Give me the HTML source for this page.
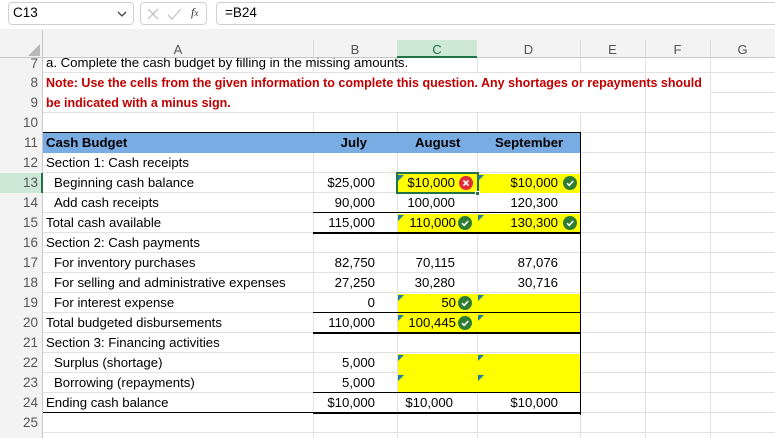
<!DOCTYPE html>
<html><head><meta charset="utf-8"><style>
*{margin:0;padding:0;box-sizing:border-box}
body{width:775px;height:438px;overflow:hidden;background:#fff;font-family:"Liberation Sans",Arial,sans-serif;position:relative}
.a{position:absolute}
.t{position:absolute;font-size:13.2px;line-height:20px;white-space:nowrap;color:#000}
.r{text-align:right}
.y{position:absolute;background:#ffff00}
.vl{position:absolute;width:1px;background:#e1e1e1}
.hl{position:absolute;height:1px;background:#e1e1e1}
.bk{position:absolute;background:#000}
.rn{position:absolute;left:0;width:38px;text-align:right;font-size:13.5px;line-height:20px;color:#555}
.ch{position:absolute;top:40px;height:18px;text-align:center;font-size:13px;line-height:20px;color:#555}
.tri{position:absolute;width:6px;height:6px}
.ok,.bad{position:absolute;width:14px;height:14px;border-radius:50%}
.ok{background:#2e7d32}.bad{background:#e12b38}
</style></head><body>
<svg width="0" height="0" style="position:absolute"><defs></defs></svg>
<!-- top bar -->
<div class="a" style="left:0;top:0;width:775px;height:40px;background:#f3f3f3"></div>
<div class="a" style="left:0;top:0;width:775px;height:29px;background:#fff"></div>
<div class="a" style="left:8px;top:2px;width:126px;height:23px;background:#fff;border:1px solid #d0d0d0;border-radius:4px"></div>
<div class="t" style="left:13px;top:3px;font-size:13.5px">C13</div>
<svg class="a" style="left:117px;top:10px" width="10" height="8"><path d="M1 2 L5 6 L9 2" stroke="#444" stroke-width="1.3" fill="none"/></svg>
<div class="a" style="left:140px;top:2px;width:67px;height:23px;background:#fff;border:1px solid #d0d0d0;border-radius:4px"></div>
<svg class="a" style="left:146px;top:7px" width="40" height="14"><path d="M2 2 L12 12 M12 2 L2 12" stroke="#c4c4c4" stroke-width="1.3"/><path d="M22 8 L26 12 L35 2" stroke="#c4c4c4" stroke-width="1.3" fill="none"/></svg>
<div class="t" style="left:191px;top:2px;font-size:12px;font-style:italic;color:#333;font-family:'Liberation Serif',serif">f<span style="font-size:9px">x</span></div>
<div class="a" style="left:216px;top:2px;width:570px;height:23px;background:#fff;border:1px solid #d0d0d0;border-radius:4px"></div>
<div class="t" style="left:225px;top:3px;font-size:13.5px">=B24</div>
<!-- header row -->
<div class="a" style="left:0;top:40px;width:775px;height:18px;background:#f3f3f3;border-bottom:1px solid #c8c8c8"></div>
<div class="a" style="left:0;top:58px;width:43px;height:380px;background:#f3f3f3;border-right:1px solid #c8c8c8"></div>
<div class="a" style="left:42px;top:30px;width:1px;height:28px;background:#c8c8c8"></div>
<svg class="a" style="left:28px;top:44px" width="12" height="12"><path d="M12 0 L12 12 L0 12 Z" fill="#b8b8b8"/></svg>
<div class="a" style="left:397px;top:40px;width:80px;height:18px;background:#cde9d6;border-bottom:2px solid #217346"></div>
<div class="ch" style="left:43px;width:270px">A</div>
<div class="ch" style="left:313px;width:84px">B</div>
<div class="ch" style="left:397px;width:80px;color:#217346">C</div>
<div class="ch" style="left:477px;width:103px">D</div>
<div class="ch" style="left:580px;width:65px">E</div>
<div class="ch" style="left:645px;width:65px">F</div>
<div class="ch" style="left:710px;width:65px">G</div>
<div class="a" style="left:313px;top:40px;width:1px;height:18px;background:#d8d8d8"></div>
<div class="a" style="left:580px;top:40px;width:1px;height:18px;background:#d8d8d8"></div>
<div class="a" style="left:645px;top:40px;width:1px;height:18px;background:#d8d8d8"></div>
<div class="a" style="left:710px;top:40px;width:1px;height:18px;background:#d8d8d8"></div>
<!-- row 13 header highlight -->
<div class="a" style="left:0;top:173px;width:43px;height:20px;background:#cde9d6;border-right:2px solid #217346"></div>
<!-- gridlines horizontal -->
<div class="hl" style="left:43px;top:72px;width:732px"></div>
<div class="hl" style="left:710px;top:92px;width:65px"></div>
<div class="hl" style="left:43px;top:112px;width:732px"></div>
<div class="hl" style="left:43px;top:132px;width:732px"></div>
<div class="hl" style="left:43px;top:152px;width:732px"></div>
<div class="hl" style="left:43px;top:172px;width:732px"></div>
<div class="hl" style="left:43px;top:192px;width:732px"></div>
<div class="hl" style="left:43px;top:212px;width:732px"></div>
<div class="hl" style="left:43px;top:232px;width:732px"></div>
<div class="hl" style="left:43px;top:252px;width:732px"></div>
<div class="hl" style="left:43px;top:272px;width:732px"></div>
<div class="hl" style="left:43px;top:292px;width:732px"></div>
<div class="hl" style="left:43px;top:312px;width:732px"></div>
<div class="hl" style="left:43px;top:332px;width:732px"></div>
<div class="hl" style="left:43px;top:352px;width:732px"></div>
<div class="hl" style="left:43px;top:372px;width:732px"></div>
<div class="hl" style="left:43px;top:392px;width:732px"></div>
<div class="hl" style="left:43px;top:412px;width:732px"></div>
<div class="hl" style="left:43px;top:432px;width:732px"></div>
<!-- vertical gridlines -->
<div class="vl" style="left:313px;top:58px;height:15px"></div>
<div class="vl" style="left:313px;top:113px;height:325px"></div>
<div class="vl" style="left:397px;top:58px;height:15px"></div>
<div class="vl" style="left:397px;top:113px;height:325px"></div>
<div class="vl" style="left:477px;top:58px;height:15px"></div>
<div class="vl" style="left:477px;top:113px;height:325px"></div>
<div class="vl" style="left:580px;top:58px;height:15px"></div>
<div class="vl" style="left:580px;top:113px;height:325px"></div>
<div class="vl" style="left:645px;top:58px;height:380px"></div>
<div class="vl" style="left:710px;top:58px;height:380px"></div>
<!-- header fill -->
<div class="a" style="left:43px;top:133px;width:537px;height:20px;background:#79ace3"></div>
<!-- yellow -->
<div class="y" style="left:398px;top:174px;width:182px;height:19px"></div>
<div class="y" style="left:398px;top:214px;width:182px;height:19px"></div>
<div class="y" style="left:398px;top:294px;width:182px;height:39px"></div>
<div class="y" style="left:398px;top:354px;width:182px;height:39px"></div>
<!-- borders -->
<div class="bk" style="left:43px;top:132px;width:538px;height:1px"></div>
<div class="bk" style="left:580px;top:132px;width:1px;height:283px"></div>
<div class="bk" style="left:313px;top:212px;width:267px;height:1px"></div>
<div class="bk" style="left:313px;top:232px;width:267px;height:2px"></div>
<div class="bk" style="left:313px;top:312px;width:267px;height:1px"></div>
<div class="bk" style="left:313px;top:332px;width:267px;height:2px"></div>
<div class="bk" style="left:313px;top:392px;width:267px;height:1px"></div>
<div class="bk" style="left:43px;top:412px;width:270px;height:1px"></div>
<div class="bk" style="left:313px;top:412px;width:268px;height:2px"></div>
<!-- selection -->
<div class="a" style="left:396px;top:172px;width:83px;height:22px;border:2px solid #217346"></div>
<div class="a" style="left:475px;top:191px;width:5px;height:5px;background:#217346;border:1px solid #fff"></div>
<!-- row numbers -->
<div class="rn" style="top:54px">7</div>
<div class="rn" style="top:73px">8</div>
<div class="rn" style="top:93px">9</div>
<div class="rn" style="top:113px">10</div>
<div class="rn" style="top:133px">11</div>
<div class="rn" style="top:153px">12</div>
<div class="rn" style="top:173px">13</div>
<div class="rn" style="top:193px">14</div>
<div class="rn" style="top:213px">15</div>
<div class="rn" style="top:233px">16</div>
<div class="rn" style="top:253px">17</div>
<div class="rn" style="top:273px">18</div>
<div class="rn" style="top:293px">19</div>
<div class="rn" style="top:313px">20</div>
<div class="rn" style="top:333px">21</div>
<div class="rn" style="top:353px">22</div>
<div class="rn" style="top:373px">23</div>
<div class="rn" style="top:393px">24</div>
<div class="rn" style="top:413px">25</div>
<!-- texts col A -->
<div class="a" style="left:43px;top:58px;width:600px;height:14px;overflow:hidden"><div class="t" style="left:3px;top:-5px">a. Complete the cash budget by filling in the missing amounts.</div></div>
<div class="t" style="left:46px;top:73px;color:#c00000;font-weight:bold;font-size:12.5px">Note: Use the cells from the given information to complete this question. Any shortages or repayments should</div>
<div class="t" style="left:46px;top:93px;color:#c00000;font-weight:bold;font-size:12.5px">be indicated with a minus sign.</div>
<div class="t" style="left:46px;top:133px;font-weight:bold">Cash Budget</div>
<div class="t" style="left:46px;top:153px">Section 1: Cash receipts</div>
<div class="t" style="left:54px;top:173px">Beginning cash balance</div>
<div class="t" style="left:54px;top:193px">Add cash receipts</div>
<div class="t" style="left:46px;top:213px">Total cash available</div>
<div class="t" style="left:46px;top:233px">Section 2: Cash payments</div>
<div class="t" style="left:54px;top:253px">For inventory purchases</div>
<div class="t" style="left:54px;top:273px">For selling and administrative expenses</div>
<div class="t" style="left:54px;top:293px">For interest expense</div>
<div class="t" style="left:46px;top:313px">Total budgeted disbursements</div>
<div class="t" style="left:46px;top:333px">Section 3: Financing activities</div>
<div class="t" style="left:54px;top:353px">Surplus (shortage)</div>
<div class="t" style="left:54px;top:373px">Borrowing (repayments)</div>
<div class="t" style="left:46px;top:393px">Ending cash balance</div>
<!-- headers -->
<div class="t r" style="left:313px;width:54px;top:133px;font-weight:bold">July</div>
<div class="t" style="left:415px;top:133px;font-weight:bold">August</div>
<div class="t" style="left:495px;top:133px;font-weight:bold">September</div>
<!-- col B -->
<div class="t r" style="left:300px;width:75px;top:173px">$25,000</div>
<div class="t r" style="left:300px;width:75px;top:193px">90,000</div>
<div class="t r" style="left:300px;width:75px;top:213px">115,000</div>
<div class="t r" style="left:300px;width:75px;top:253px">82,750</div>
<div class="t r" style="left:300px;width:75px;top:273px">27,250</div>
<div class="t r" style="left:300px;width:75px;top:293px">0</div>
<div class="t r" style="left:300px;width:75px;top:313px">110,000</div>
<div class="t r" style="left:300px;width:75px;top:353px">5,000</div>
<div class="t r" style="left:300px;width:75px;top:373px">5,000</div>
<div class="t r" style="left:300px;width:75px;top:393px">$10,000</div>
<!-- col C -->
<div class="t r" style="left:390px;width:65px;top:173px">$10,000</div>
<div class="t r" style="left:390px;width:65px;top:193px">100,000</div>
<div class="t r" style="left:390px;width:66px;top:213px">110,000</div>
<div class="t r" style="left:390px;width:65px;top:253px">70,115</div>
<div class="t r" style="left:390px;width:65px;top:273px">30,280</div>
<div class="t r" style="left:390px;width:66px;top:293px">50</div>
<div class="t r" style="left:390px;width:66px;top:313px">100,445</div>
<div class="t r" style="left:390px;width:63px;top:393px">$10,000</div>
<!-- col D -->
<div class="t r" style="left:480px;width:78px;top:173px">$10,000</div>
<div class="t r" style="left:480px;width:78px;top:193px">120,300</div>
<div class="t r" style="left:480px;width:78px;top:213px">130,300</div>
<div class="t r" style="left:480px;width:78px;top:253px">87,076</div>
<div class="t r" style="left:480px;width:78px;top:273px">30,716</div>
<div class="t r" style="left:480px;width:78px;top:393px">$10,000</div>
<!-- triangles -->
<svg class="tri" style="left:398px;top:175px"><path d="M0 0H6L0 6Z" fill="#1b7fa6"/></svg>
<svg class="tri" style="left:478px;top:175px"><path d="M0 0H6L0 6Z" fill="#1b7fa6"/></svg>
<svg class="tri" style="left:398px;top:215px"><path d="M0 0H6L0 6Z" fill="#1b7fa6"/></svg>
<svg class="tri" style="left:478px;top:215px"><path d="M0 0H6L0 6Z" fill="#1b7fa6"/></svg>
<svg class="tri" style="left:398px;top:295px"><path d="M0 0H6L0 6Z" fill="#1b7fa6"/></svg>
<svg class="tri" style="left:478px;top:295px"><path d="M0 0H6L0 6Z" fill="#1b7fa6"/></svg>
<svg class="tri" style="left:398px;top:315px"><path d="M0 0H6L0 6Z" fill="#1b7fa6"/></svg>
<svg class="tri" style="left:478px;top:315px"><path d="M0 0H6L0 6Z" fill="#1b7fa6"/></svg>
<svg class="tri" style="left:398px;top:355px"><path d="M0 0H6L0 6Z" fill="#1b7fa6"/></svg>
<svg class="tri" style="left:478px;top:355px"><path d="M0 0H6L0 6Z" fill="#1b7fa6"/></svg>
<svg class="tri" style="left:398px;top:375px"><path d="M0 0H6L0 6Z" fill="#1b7fa6"/></svg>
<svg class="tri" style="left:478px;top:375px"><path d="M0 0H6L0 6Z" fill="#1b7fa6"/></svg>
<!-- icons -->
<div class="bad" style="left:459px;top:176px"><svg width="14" height="14"><path d="M4.5 4.5 L9.5 9.5 M9.5 4.5 L4.5 9.5" stroke="#fff" stroke-width="1.6"/></svg></div>
<div class="ok" style="left:563px;top:176px"><svg width="14" height="14"><path d="M4 7.2 L6.2 9.3 L10.2 5" stroke="#fff" stroke-width="1.6" fill="none"/></svg></div>
<div class="ok" style="left:458px;top:216px"><svg width="14" height="14"><path d="M4 7.2 L6.2 9.3 L10.2 5" stroke="#fff" stroke-width="1.6" fill="none"/></svg></div>
<div class="ok" style="left:563px;top:216px"><svg width="14" height="14"><path d="M4 7.2 L6.2 9.3 L10.2 5" stroke="#fff" stroke-width="1.6" fill="none"/></svg></div>
<div class="ok" style="left:458px;top:296px"><svg width="14" height="14"><path d="M4 7.2 L6.2 9.3 L10.2 5" stroke="#fff" stroke-width="1.6" fill="none"/></svg></div>
<div class="ok" style="left:458px;top:316px"><svg width="14" height="14"><path d="M4 7.2 L6.2 9.3 L10.2 5" stroke="#fff" stroke-width="1.6" fill="none"/></svg></div>
</body></html>
